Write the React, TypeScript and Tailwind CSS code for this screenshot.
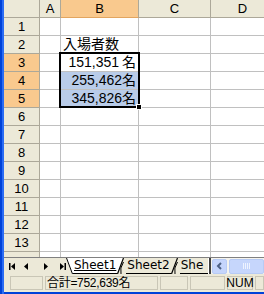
const ROWS = [1, 2, 3, 4, 5, 6, 7, 8, 9, 10, 11, 12, 13];

function Row({ n }: { n: number }) {
  const sel = n >= 3 && n <= 5;
  const blue = n === 4 || n === 5;
  return (
    <div className="flex h-[18px] shrink-0">
      <div
        className={`w-[36px] shrink-0 border-r border-b border-[#aca899] flex items-center justify-center text-[13px] leading-none ${
          sel ? "bg-[#f9c98e]" : "bg-[#ece9d8]"
        }`}
      >
        {n}
      </div>
      <div className="w-[21px] shrink-0 border-r border-b border-[#c0c0c0] bg-white" />
      <div
        className={`w-[78px] shrink-0 border-r border-b border-[#c0c0c0] flex items-end pb-[1px] text-[14px] leading-[15px] ${
          blue ? "bg-[#b9cce9]" : "bg-white"
        }`}
      >
        {n === 2 && <span className="pl-[2px]">入場者数</span>}
        {n === 3 && (
          <span className="ml-auto pr-[2px]">
            151,351<span className="ml-[3px]">名</span>
          </span>
        )}
        {n === 4 && <span className="ml-auto pr-[2px]">255,462名</span>}
        {n === 5 && <span className="ml-auto pr-[2px]">345,826名</span>}
      </div>
      <div className="w-[72px] shrink-0 border-r border-b border-[#c0c0c0] bg-white" />
      <div className="flex-1 border-b border-[#c0c0c0] bg-white" />
    </div>
  );
}

function NavButtons() {
  return (
    <svg width="62" height="17" viewBox="0 0 62 17" className="shrink-0">
      <rect x="5" y="5" width="1.5" height="7" fill="#000" />
      <polygon points="11,5 7,8.5 11,12" fill="#000" />
      <polygon points="24,5 20,8.5 24,12" fill="#000" />
      <polygon points="40,5 44,8.5 40,12" fill="#000" />
      <polygon points="56,5 60,8.5 56,12" fill="#000" />
      <rect x="60.5" y="5" width="1.5" height="7" fill="#000" />
    </svg>
  );
}

export default function App() {
  return (
    <div className="w-[264px] h-[294px] flex overflow-hidden bg-[#ece9d8] font-['Liberation_Sans','Noto_Sans_CJK_JP',sans-serif] text-black">
      {/* window edge */}
      <div className="w-[4px] shrink-0 flex">
        <div className="w-[2px] bg-[#0042d8]" />
        <div className="w-[2px] bg-[#2a6cf4]" />
      </div>

      <div className="flex-1 flex flex-col min-w-0">
        {/* sheet grid */}
        <div className="relative flex flex-col">
          <div className="flex h-[18px] shrink-0 text-[13px]">
            <div className="w-[36px] shrink-0 border-r border-b border-[#aca899] bg-[#ece9d8]" />
            <div className="w-[21px] shrink-0 border-r border-b border-[#aca899] bg-[#ece9d8] flex items-center justify-center">A</div>
            <div className="w-[78px] shrink-0 border-r border-b border-[#aca899] border-b-[#e2a560] bg-[#f9c98e] flex items-center justify-center">B</div>
            <div className="w-[72px] shrink-0 border-r border-b border-[#aca899] bg-[#ece9d8] flex items-center justify-center">C</div>
            <div className="flex-1 border-b border-[#aca899] bg-[#ece9d8] flex items-center justify-center pl-[10px]">D</div>
          </div>
          {ROWS.map(n => <Row key={n} n={n} />)}
          {/* row 14, cut off */}
          <div className="flex h-[5px] shrink-0">
            <div className="w-[36px] shrink-0 border-r border-[#aca899] bg-[#ece9d8]" />
            <div className="w-[21px] shrink-0 border-r border-[#c0c0c0] bg-white" />
            <div className="w-[78px] shrink-0 border-r border-[#c0c0c0] bg-white" />
            <div className="w-[72px] shrink-0 border-r border-[#c0c0c0] bg-white" />
            <div className="flex-1 bg-white" />
          </div>

          {/* selection B3:B5 */}
          <div className="absolute left-[55px] top-[52px] w-[81px] h-[56px] border-2 border-black pointer-events-none" />
          <div className="absolute left-[132px] top-[104px] w-[6px] h-[6px] bg-black border border-white" />
        </div>

        {/* sheet tabs + scroll bar */}
        <div className="flex h-[17px] shrink-0 border-t border-[#808080] bg-[#ece9d8]">
          <NavButtons />
          <div className="flex w-[142px] shrink-0 overflow-hidden font-['DejaVu_Sans',sans-serif] text-[12px] leading-[15px]">
            <svg width="7" height="16" viewBox="0 0 7 16" className="shrink-0">
              <polygon points="0,0 7,0 7,16 6,16" fill="#fff" />
              <line x1="0.5" y1="0" x2="6.5" y2="16" stroke="#000" strokeWidth="1" />
            </svg>
            <div className="bg-white border-b border-black px-[1px] shrink-0">
              <span className="underline underline-offset-[1px]">Sheet1</span>
            </div>
            <svg width="9" height="16" viewBox="0 0 9 16" className="shrink-0">
              <polygon points="0,0 6,0 0,16" fill="#fff" />
              <line x1="0.5" y1="16" x2="6.5" y2="0" stroke="#000" strokeWidth="1.2" />
              <path d="M4 16 Q2.5 10 6.5 4" stroke="#000" strokeWidth="1" fill="none" />
            </svg>
            <div className="border-b border-black shrink-0 px-[1px]">Sheet2</div>
            <svg width="9" height="16" viewBox="0 0 9 16" className="shrink-0">
              <line x1="0.5" y1="16" x2="6.5" y2="0" stroke="#000" strokeWidth="1.2" />
              <path d="M4 16 Q2.5 10 6.5 4" stroke="#000" strokeWidth="1" fill="none" />
            </svg>
            <div className="flex-1 border-b border-black px-[1px]">She</div>
          </div>
          <div className="w-[3px] shrink-0 flex">
            <div className="w-[1px] bg-[#ffffff]" />
            <div className="w-[2px] bg-[#404040]" />
          </div>
          <div className="flex-1 flex items-center gap-[2px] pl-[1px] bg-[#f4f3ee] min-w-0">
            <div className="w-[15px] h-[15px] shrink-0 rounded-[2px] border border-[#b7cbf5] bg-[#c5d5fc] flex items-center justify-center">
              <svg width="7" height="8" viewBox="0 0 7 8">
                <path d="M5 1 L2 4 L5 7" stroke="#4d6185" strokeWidth="2" fill="none" />
              </svg>
            </div>
            <div className="flex-1 h-[15px] rounded-[2px] border border-[#b7cbf5] bg-[#c6d6fc] flex items-center justify-center">
              <svg width="7" height="6" viewBox="0 0 7 6">
                <rect x="0" y="0" width="1" height="6" fill="#eef3ff" />
                <rect x="2" y="0" width="1" height="6" fill="#eef3ff" />
                <rect x="4" y="0" width="1" height="6" fill="#eef3ff" />
                <rect x="6" y="0" width="1" height="6" fill="#eef3ff" />
              </svg>
            </div>
          </div>
        </div>

        {/* status bar */}
        <div className="flex h-[18px] shrink-0 items-center gap-[2px] pl-[6px] text-[12px] leading-none">
          <div className="w-[33px] h-[14px] shrink-0 border border-[#c9c6b6]" />
          <div className="w-[113px] h-[14px] shrink-0 border border-[#c9c6b6] flex items-center pl-[1px] tracking-[-0.3px]">
            合計=752,639名
          </div>
          <div className="w-[28px] h-[14px] shrink-0 border border-[#c9c6b6]" />
          <div className="w-[35px] h-[14px] shrink-0 border border-[#c9c6b6]" />
          <div className="w-[26px] h-[14px] shrink-0 border border-[#c9c6b6] flex items-center justify-center">NUM</div>
          <div className="flex-1 h-[14px] border border-[#c9c6b6]" />
        </div>
        <div className="h-[2px] shrink-0 bg-[#0042d8]" />
      </div>
    </div>
  );
}
